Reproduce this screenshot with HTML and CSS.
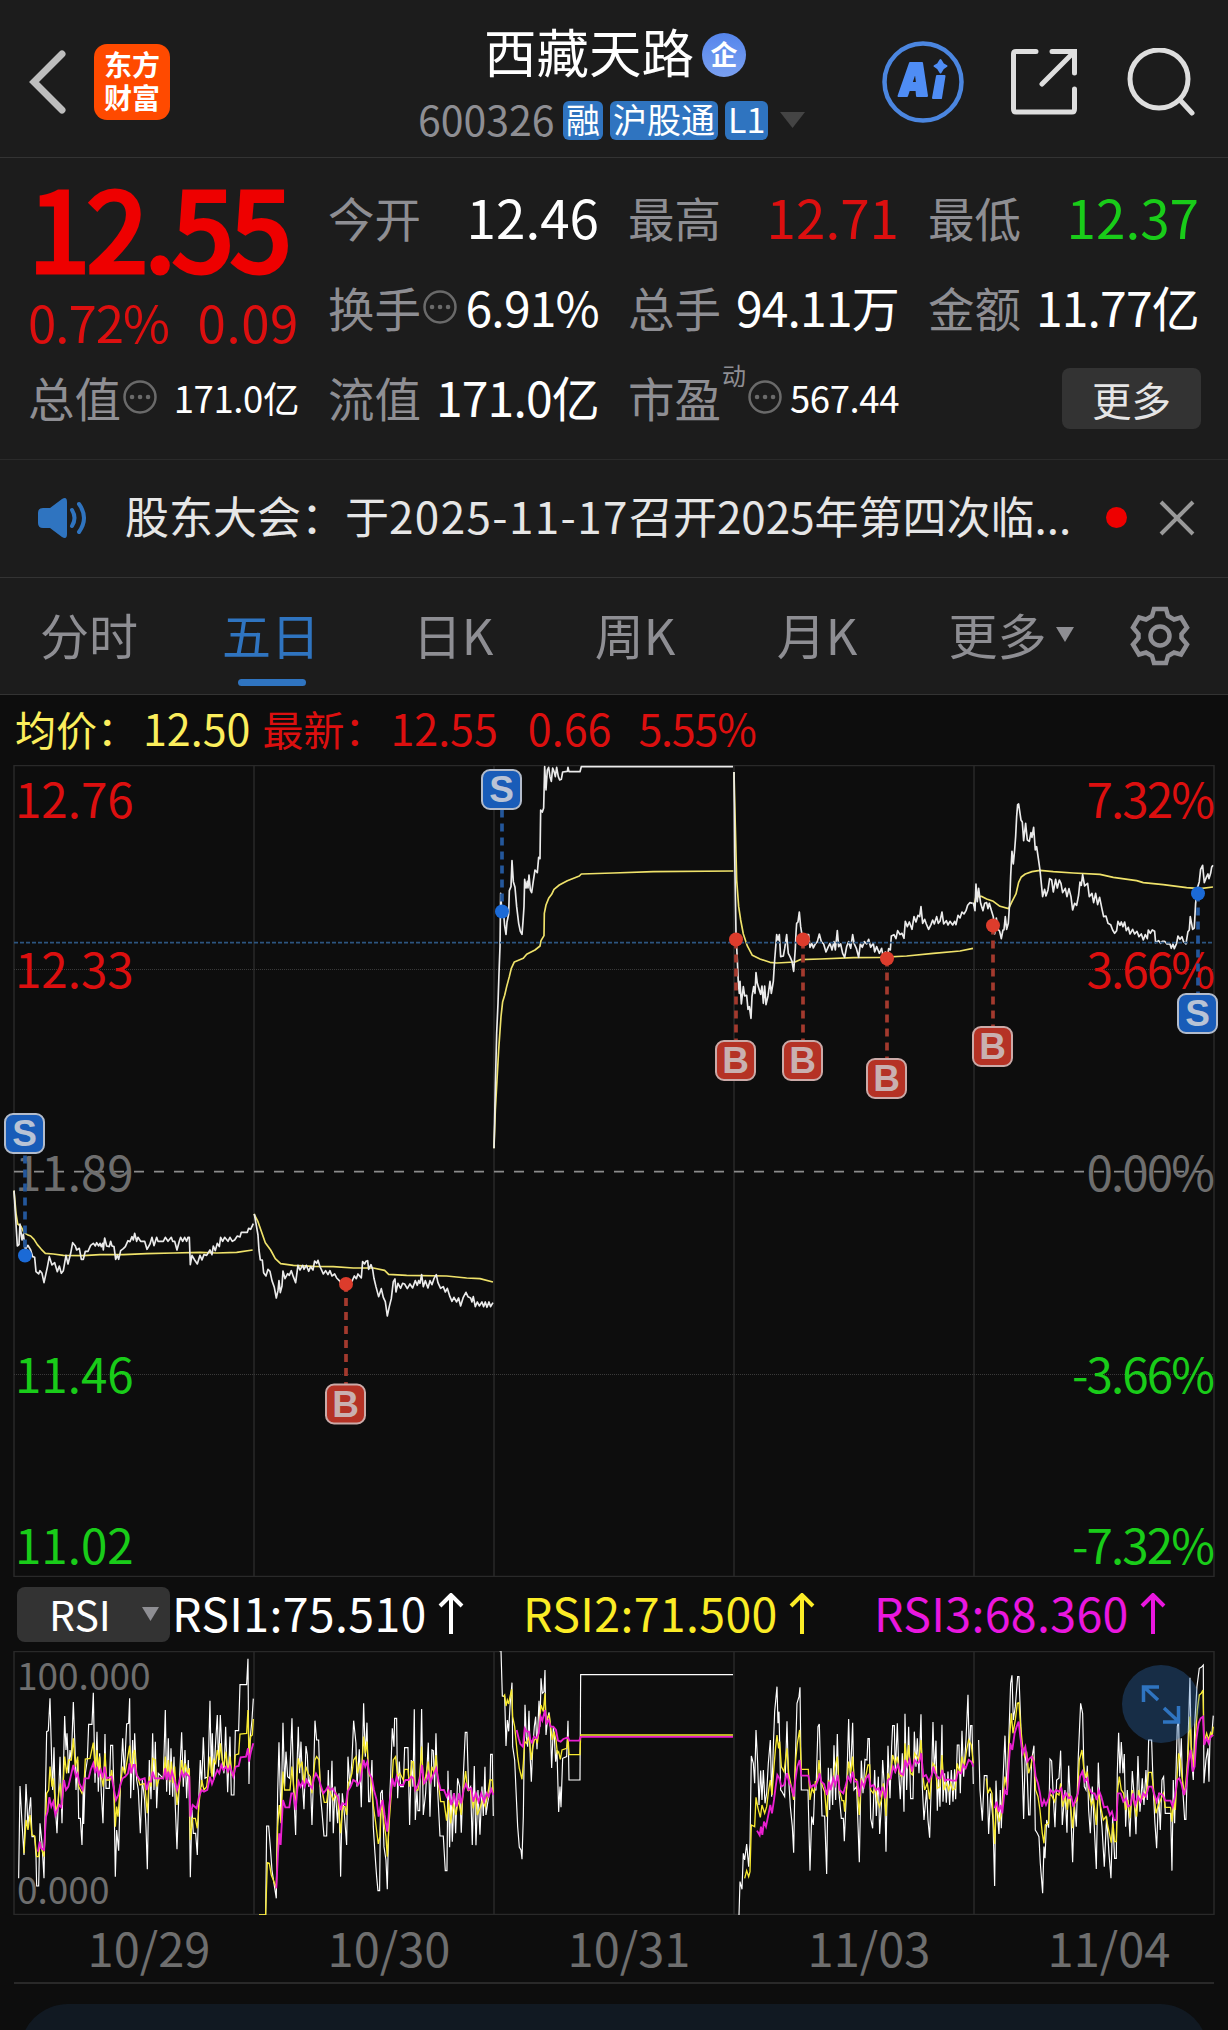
FILE: index.html
```html
<!DOCTYPE html>
<html lang="zh-CN">
<head>
    <meta charset="UTF-8">
    <meta name="viewport" content="width=device-width, initial-scale=1.0">
    <title>西藏天路 600326</title>

    <link rel="stylesheet" href="styles.css">
</head>
<body>
    <header class="topbar">
        <div class="topbar-left">
            <svg class="back" width="38" height="64" viewBox="0 0 38 64"><path d="M34 4L6 32L34 60"/></svg>
            <div class="logo"><span>东方</span><span>财富</span></div>
        </div>
        <div class="stock">
            <div class="stock-name">西藏天路<span class="qi">企</span></div>
            <div class="stock-code">
                <span class="code">600326</span>
                <span class="tag">融</span>
                <span class="tag">沪股通</span>
                <span class="tag">L1</span>
                <svg class="down" width="26" height="16" viewBox="0 0 26 16"><path d="M0 0H25L12.5 16Z"/></svg>
            </div>
        </div>
        <div class="topbar-right">
            <svg width="82" height="82" viewBox="0 0 82 82">
                <circle cx="41" cy="41" r="38.5" fill="none" stroke="#4b86e0" stroke-width="4.5"/>
                <path fill="#4f8df5" fill-rule="evenodd" stroke="#4f8df5" stroke-width="2" stroke-linejoin="round" d="M28 22H40L45 55H35L34.500 49H27L25 55H16.500ZM33.500 30L29.500 42H35ZM55 35H62.500L59 57H51ZM58.500 19L61 23L64.500 25L61 27.500L58.500 31.500L56 27.500L52.500 25L56 23Z"/>
            </svg>
            <svg class="line-icon" width="68" height="68" viewBox="0 0 68 68">
                <path d="M26 3.500H6Q3.500 3.500 3.500 6V61Q3.500 64 6 64H62Q64.500 64 64.500 61V41M42 3.500H64.500V25M62 6L32 36"/>
            </svg>
            <svg class="line-icon search" width="68" height="68" viewBox="0 0 68 68">
                <circle cx="32" cy="31" r="29"/><path d="M53 52L65 65"/>
            </svg>
        </div>
    </header>

    <section class="quote">
        <div class="price">
            <div class="price-now">12.55</div>
            <div class="price-change"><span>0.72%</span><span class="diff">0.09</span></div>
        </div>
        <div class="cell"><label>今开</label><b class="big">12.46</b></div>
        <div class="cell"><label>最高</label><b class="big red">12.71</b></div>
        <div class="cell"><label>最低</label><b class="big green">12.37</b></div>
        <div class="cell"><label>换手</label><svg class="dots" viewBox="0 0 34 34"><circle cx="17" cy="17" r="15.500"/><path d="M9 17h.1M17 17h.1M25 17h.1"/></svg><b>6.91%</b></div>
        <div class="cell"><label>总手</label><b>94.11万</b></div>
        <div class="cell"><label>金额</label><b>11.77亿</b></div>
        <div class="cell"><label>总值</label><svg class="dots" viewBox="0 0 34 34"><circle cx="17" cy="17" r="15.500"/><path d="M9 17h.1M17 17h.1M25 17h.1"/></svg><b class="small">171.0亿</b></div>
        <div class="cell"><label>流值</label><b>171.0亿</b></div>
        <div class="cell"><label>市盈</label><sup>动</sup><svg class="dots" viewBox="0 0 34 34"><circle cx="17" cy="17" r="15.500"/><path d="M9 17h.1M17 17h.1M25 17h.1"/></svg><b class="small">567.44</b></div>
        <div class="cell cell-more"><button class="more-btn">更多</button></div>
    </section>

    <section class="notice">
        <svg width="52" height="50" viewBox="0 0 52 50">
            <path fill="#2f74c0" d="M6 15H13L25 6Q30 3 30 9V41Q30 47 25 44L13 35H6Q1 35 1 30V20Q1 15 6 15Z"/>
            <path fill="none" stroke="#2f74c0" stroke-width="4" stroke-linecap="round" d="M35 17Q40 25 35 33M42 11Q52 25 42 39"/>
        </svg>
        <div class="notice-text">股东大会：于<span class="date">2025-11-17</span>召开2025年第四次临...</div>
        <span class="red-dot"></span>
        <svg class="close" width="36" height="36" viewBox="0 0 36 36"><path d="M2 2L34 34M34 2L2 34"/></svg>
    </section>

    <nav class="tabs">
        <a class="tab">分时</a>
        <a class="tab active">五日</a>
        <a class="tab">日K</a>
        <a class="tab">周K</a>
        <a class="tab">月K</a>
        <a class="tab tab-more">更多<svg width="18" height="15" viewBox="0 0 18 15"><path fill="#8e8e93" d="M0 0H18L9 15Z"/></svg></a>
        <svg class="gear" width="62" height="64" viewBox="-31 -32 62 64">
            <path d="M-6-27H6L8-20L14-16.500L21-18.500L27-8.500L21.500-2V2L27 8.500L21 18.500L14 16.500L8 20L6 27H-6L-8 20L-14 16.500L-21 18.500L-27 8.500L-21.500 2V-2L-27-8.500L-21-18.500L-14-16.500L-8-20Z"/>
            <circle r="9.500"/>
        </svg>
    </nav>

    <main class="chart">
        <div class="legend">
            <span class="yellow">均价：<i>12.50</i></span>
            <span class="latest">最新：<i>12.55</i></span>
            <span class="latest"><i>0.66</i></span>
            <span class="latest percent"><i>5.55%</i></span>
        </div>

        <svg class="price-chart" width="1228" height="812" viewBox="0 765 1228 812">
            <path class="grid" d="M14 765.500H1214M14 1576.500H1214M14 765V1577M254 765V1577M494 765V1577M734 765V1577M974 765V1577M1214 765V1577"/>
            <path class="grid-dot" d="M14 969.500H1214M14 1374.500H1214"/>
            <path class="zero" d="M14 1171.700H1214"/>

            <!-- average price, one path per day -->
            <g class="avg">
                <path transform="translate(0 1100) scale(.3333)" d="M42 272L48 340L53 372L62 378L72 398L82 404L92 408L102 418L112 434L124 448L136 460L160 462L190 466L250 467L300 464L370 464L440 461L520 459L600 457L650 459L710 457L758 450"/>
                <path transform="translate(0 1100) scale(.3333)" d="M762 342L774 365L784 394L796 428L812 450L826 476L842 491L880 496L940 499L1000 500L1060 504L1120 504L1154 511L1166 523L1220 526L1340 528L1400 534L1440 536L1479 546"/>
                <path transform="translate(480 760) scale(.3333)" d="M42 1165L46 1050L51 960L56 870L63 770L68 725L74 706L80 680L88 650L94 625L103 606L130 595L140 583L165 570L180 558L183 542L192 527L193 460L198 435L206 415L215 403L222 388L238 375L262 362L298 348L304 342L400 339L520 335L760 333"/>
                <path transform="translate(720 760) scale(.3333)" d="M42 36L46 200L50 360L56 440L62 480L70 522L82 558L97 586L120 597L150 607L170 609L225 606L240 599L300 597L400 593L480 592L560 588L640 580L720 573L759 565"/>
                <path transform="translate(720 760) scale(.3333)" d="M762 438L768 410L784 409L800 417L820 424L840 439L866 446L876 425L888 402L896 367L904 351L916 342L936 335L960 331L1000 335L1060 339L1140 343L1180 352L1250 362L1270 368L1330 374L1400 383L1440 386L1479 381"/>
            </g>

            <g class="now">
                <path transform="translate(0 1100) scale(.3333)" d="M42 272L46 340L52 438L57 434L60 372L66 420L70 402L76 448L84 436L92 450L98 470L104 472L108 515L116 522L120 512L126 520L132 548L138 520L142 502L148 470L156 495L164 488L172 515L178 498L184 520L190 512L198 466L204 492L212 460L218 428L226 438L230 450L238 445L244 478L250 478L256 454L264 454L272 436L280 430L286 438L290 428L296 438L300 430L304 440L308 430L310 450L314 414L320 438L328 440L332 424L336 438L342 440L347 478L352 466L356 478L362 452L370 446L376 440L384 422L390 425L396 410L400 420L404 400L410 424L414 412L422 424L434 424L441 448L450 432L456 412L462 437L470 412L474 424L490 424L496 412L504 424L514 412L518 424L524 424L531 450L538 424L542 412L548 424L554 412L560 424L564 412L568 412L571 494L576 466L584 480L592 492L600 466L606 480L612 464L620 466L630 450L636 464L640 438L646 452L652 430L658 440L662 412L668 424L674 412L684 424L690 412L697 424L704 420L712 408L720 411L724 397L742 397L746 385L752 388L760 371"/>
                <path transform="translate(0 1100) scale(.3333)" d="M763 342L768 370L774 405L777 450L781 480L787 480L791 518L798 528L804 508L810 514L816 542L823 562L829 594L834 572L837 542L841 578L846 558L849 513L855 536L863 521L868 526L874 512L880 530L887 548L894 496L900 510L908 496L912 508L919 496L926 514L932 500L939 510L944 483L950 490L954 481L960 500L964 508L970 522L977 512L984 524L990 512L996 528L1004 522L1010 534L1018 542L1026 556L1036 564L1044 552L1050 540L1056 544L1063 528L1069 536L1074 522L1084 534L1088 485L1094 492L1098 484L1103 482L1106 508L1113 494L1118 508L1122 535L1128 560L1136 590L1144 566L1150 592L1156 605L1162 648L1168 620L1174 596L1180 545L1185 537L1188 576L1194 550L1202 565L1208 550L1214 552L1222 566L1230 552L1238 564L1246 542L1252 556L1256 542L1260 550L1265 524L1270 560L1276 542L1284 564L1290 542L1296 554L1302 536L1309 524L1314 548L1322 565L1330 560L1336 576L1342 565L1350 590L1356 604L1362 592L1370 606L1376 594L1382 618L1390 592L1398 577L1404 590L1412 594L1416 606L1420 590L1426 620L1432 606L1438 618L1446 606L1451 620L1456 606L1461 622L1467 606L1472 620L1479 608"/>
                <path transform="translate(480 760) scale(.3333)" d="M42 1165L46 980L50 820L54 730L57 640L60 560L62 400L66 460L70 450L74 498L78 523L81 486L86 462L88 392L93 380L96 302L100 365L105 382L110 440L116 490L121 514L126 523L129 485L132 440L134 358L138 384L142 364L144 384L147 345L151 390L155 398L160 363L165 330L172 338L176 292L180 296L182 150L187 156L191 144L194 20L198 90L202 30L206 22L210 50L214 64L218 24L222 34L226 50L230 22L235 50L239 60L244 58L248 36L262 34L264 22L267 35L300 35L304 20H759"/>
                <path transform="translate(720 760) scale(.3333)" d="M42 36L44 280L48 520L52 600L55 670L58 700L60 664L64 732L70 680L74 708L80 706L84 748L88 740L93 775L96 710L101 680L105 700L108 638L112 670L118 690L122 703L126 678L130 730L134 678L138 734L144 708L150 664L154 700L160 664L164 600L170 524L174 540L178 524L182 590L190 588L194 566L200 524L205 580L210 590L216 604L221 634L226 566L228 520L230 490L234 486L238 456L242 500L246 524L252 545L260 524L266 524L270 562L276 550L280 564L286 552L292 545L298 522L304 545L311 552L318 576L324 562L330 550L336 570L342 545L346 570L352 512L356 560L362 552L368 580L374 592L380 560L386 545L392 565L398 524L403 552L409 565L416 592L421 552L427 562L433 545L440 552L446 538L452 562L460 550L464 576L470 560L478 580L485 565L490 594L496 576L502 594L506 566L511 570L514 528L522 524L528 536L533 512L540 524L546 520L552 535L556 484L562 500L568 486L576 508L582 470L588 486L594 466L599 470L603 440L608 490L614 478L619 492L626 508L633 494L638 480L643 492L650 470L655 490L660 484L666 456L671 492L679 482L684 495L690 484L698 495L704 484L708 494L714 466L720 474L726 456L732 462L738 452L743 436L750 428L758 430"/>
                <path transform="translate(720 760) scale(.3333)" d="M760 428L765 452L768 372L772 425L776 385L782 430L789 452L794 430L800 428L804 446L808 430L815 454L820 470L824 522L829 474L834 508L839 514L844 536L849 510L852 510L856 470L860 508L865 490L869 430L872 350L876 274L880 312L884 270L887 230L890 170L893 134L896 132L903 180L907 186L911 242L917 190L922 240L928 244L933 218L936 232L941 202L946 270L950 260L954 288L960 330L964 370L968 410L974 388L978 408L984 390L989 356L995 360L1000 396L1007 358L1012 384L1018 360L1023 370L1028 398L1036 385L1041 410L1047 386L1053 410L1058 450L1064 430L1070 436L1076 405L1080 366L1084 376L1088 344L1094 378L1103 370L1108 410L1116 400L1121 428L1127 400L1133 434L1139 412L1145 442L1151 470L1158 468L1164 490L1172 494L1178 510L1184 520L1190 512L1194 484L1200 496L1204 486L1209 500L1214 486L1219 512L1225 502L1230 522L1238 508L1244 522L1251 514L1257 530L1264 522L1270 540L1276 524L1282 536L1285 510L1291 520L1297 510L1304 514L1307 548L1316 542L1322 550L1327 544L1334 544L1341 552L1350 552L1354 565L1359 552L1363 566L1370 550L1374 528L1380 538L1386 530L1391 545L1398 552L1404 515L1408 510L1411 470L1418 508L1423 504L1427 430L1433 382L1438 365L1442 328L1448 316L1453 368L1460 350L1464 342L1467 356L1472 340L1475 322L1479 316"/>
            </g>
            <path class="blue-line" d="M14 942.700H1214"/>

            <g class="axis">
                <text class="red" x="15" y="818">12.76</text>
                <text class="red" x="15" y="988">12.33</text>
                <text class="gray" x="15" y="1191">11.89</text>
                <text class="green" x="15" y="1393">11.46</text>
                <text class="green" x="15" y="1564">11.02</text>
            </g>
            <g class="axis axis-right">
                <text class="red" x="1213" y="818">7.32%</text>
                <text class="red" x="1213" y="988">3.66%</text>
                <text class="gray" x="1213" y="1191">0.00%</text>
                <text class="green" x="1213" y="1393">-3.66%</text>
                <text class="green" x="1213" y="1564">-7.32%</text>
            </g>

            <!-- buy / sell marks -->
            <g class="mark sell" transform="translate(24.500 1133.500)"><path d="M0.500 22V120"/><circle cx=".5" cy="122" r="7"/><rect x="-19.500" y="-19.500" width="39" height="39" rx="8"/><text y="12.500">S</text></g>
            <g class="mark buy" transform="translate(345.500 1404)"><path d="M.5 -120V-20"/><circle cx=".5" cy="-120" r="7"/><rect x="-19.500" y="-19.500" width="39" height="39" rx="8"/><text y="12.500">B</text></g>
            <g class="mark sell" transform="translate(501.500 789.500)"><path d="M.5 20V120"/><circle cx=".5" cy="122" r="7"/><rect x="-19.500" y="-19.500" width="39" height="39" rx="8"/><text y="12.500">S</text></g>
            <g class="mark buy" transform="translate(735.500 1060.500)"><path d="M.5 -120V-20"/><circle cx=".5" cy="-121" r="7"/><rect x="-19.500" y="-19.500" width="39" height="39" rx="8"/><text y="12.500">B</text></g>
            <g class="mark buy" transform="translate(802.500 1060.500)"><path d="M.5 -120V-20"/><circle cx=".5" cy="-121" r="7"/><rect x="-19.500" y="-19.500" width="39" height="39" rx="8"/><text y="12.500">B</text></g>
            <g class="mark buy" transform="translate(886.500 1078.500)"><path d="M.5 -120V-20"/><circle cx=".5" cy="-120" r="7"/><rect x="-19.500" y="-19.500" width="39" height="39" rx="8"/><text y="12.500">B</text></g>
            <g class="mark buy" transform="translate(992.500 1046.500)"><path d="M.5 -120V-20"/><circle cx=".5" cy="-121" r="7"/><rect x="-19.500" y="-19.500" width="39" height="39" rx="8"/><text y="12.500">B</text></g>
            <g class="mark sell" transform="translate(1197.500 1013.500)"><path d="M.5 -120V-20"/><circle cx=".5" cy="-120" r="7"/><rect x="-19.500" y="-19.500" width="39" height="39" rx="8"/><text y="12.500">S</text></g>
        </svg>

        <div class="rsi-bar">
            <button class="rsi-select">RSI<svg width="17" height="14" viewBox="0 0 17 14"><path fill="#8e8e93" d="M0 0H17L8.500 14Z"/></svg></button>
            <span class="rsi1">RSI1:75.510<svg class="up" viewBox="0 0 26 42"><path d="M13 41V3M2 13L13 2L24 13"/></svg></span>
            <span class="rsi2">RSI2:71.500<svg class="up" viewBox="0 0 26 42"><path d="M13 41V3M2 13L13 2L24 13"/></svg></span>
            <span class="rsi3">RSI3:68.360<svg class="up" viewBox="0 0 26 42"><path d="M13 41V3M2 13L13 2L24 13"/></svg></span>
        </div>

        <svg class="rsi-chart" width="1228" height="264" viewBox="0 1651 1228 264">
            <path class="grid" d="M14 1651.500H1214M14 1914.500H1214M14 1651V1915M254 1651V1915M494 1651V1915M734 1651V1915M974 1651V1915M1214 1651V1915"/>
            <g class="axis axis-rsi">
                <text class="gray" x="17" y="1690">100.000</text>
                <text class="gray" x="17" y="1904">0.000</text>
            </g>

            <g class="line1">
                <path transform="translate(0 1560) scale(.3333)" d="M56 955L60 678L66 790L72 885L78 672L84 800L88 750L92 712L96 830L104 830L108 890L110 978L116 978L120 790L126 850L132 955L136 720L140 515L145 512L150 415L155 600L158 690L162 562L166 740L171 820L176 700L180 590L186 790L190 640L194 468L198 570L201 520L206 640L210 570L214 600L220 426L225 560L228 690L233 600L236 775L241 775L246 855L250 680L251 792L256 640L262 600L266 493L276 493L280 398L285 668L291 515L295 695L299 580L304 700L309 790L315 522L318 685L328 685L332 556L338 556L342 700L346 950L350 810L356 872L361 680L368 535L373 640L380 492L386 490L389 415L392 715L398 540L401 690L404 520L410 660L415 690L421 820L427 660L434 720L438 800L442 928L448 600L453 718L458 520L462 690L466 545L470 745L475 640L490 655L496 450L500 695L505 535L509 705L513 565L518 710L522 590L526 740L531 868L537 690L545 517L550 680L555 570L560 715L565 600L568 720L571 952L576 750L580 820L587 820L592 885L597 700L601 600L605 680L610 532L615 655L624 650L630 422L634 640L637 520L641 660L647 545L652 465L656 620L661 465L667 600L672 640L677 500L683 697L690 530L694 705L702 705L706 512L716 512L720 374L740 374L744 296L747 672L750 540L756 480L760 416"/>
                <path transform="translate(0 1560) scale(.3333)" d="M777 1065H797L800 798H806L811 860L816 930L822 970L829 1015L833 700L837 547L843 780L849 488L854 680L858 575L863 650L869 655L876 475L881 690L887 825L891 620L895 500L899 640L903 545L908 680L912 748L918 558L922 585L926 680L931 650L936 795L941 640L945 482L950 540L956 540L961 700L966 755L972 828L980 828L985 630L990 785L996 602L1000 820L1005 680L1013 790L1017 700L1022 950L1027 700L1033 760L1040 855L1044 590L1050 680L1056 600L1061 482L1068 550L1071 680L1078 568L1084 742L1091 430L1096 590L1101 488L1106 725L1110 725L1116 600L1120 800L1125 880L1130 950L1134 992L1139 992L1142 700L1147 690L1152 860L1158 900L1162 988L1167 760L1172 650L1177 505L1182 560L1184 475H1190L1193 715L1198 605L1202 680H1210L1214 563L1224 563L1229 795L1234 600L1239 680L1243 448L1246 780L1251 690L1254 752H1259L1265 447L1270 765L1277 700L1285 548L1290 770L1296 570L1300 572L1304 680L1308 520L1313 690L1320 828L1330 828L1336 932H1341L1344 632L1349 862L1353 690L1357 845L1363 700L1367 820L1373 655L1379 680L1384 818L1390 650L1396 517H1401L1406 690L1412 680L1417 855L1423 618L1428 856L1434 690L1440 824L1446 680L1450 768L1455 620L1458 765L1463 730L1470 690L1472 583H1477L1480 768"/>
                <path transform="translate(480 1560) scale(.3333)" d="M57 272H63L67 408L74 410L78 558L82 480L86 514L90 440L96 368L98 560L104 600L108 690L113 800L118 862L123 870L126 898L130 770L132 620L135 434L139 530L143 560L147 452L151 600L154 665L158 570L163 500L167 470L171 568L177 422L180 500L183 355L187 400L192 395L195 330L198 525L203 475L207 457L211 500L215 624L220 500L223 530L227 605L231 570L236 756L240 680L243 742L248 595L260 590L264 482L267 660H300L302 344H759"/>
                <path transform="translate(728 1560) scale(.3333)" d="M33 1065L36 965L42 988L46 880L50 900L56 852L62 920L66 850L70 588L76 610L80 670L84 510L89 610L93 735L98 632L102 720L106 630L111 730L116 700L121 610L127 540L131 710L136 560L140 455L147 380L150 490L153 455L158 690L162 695L170 710L177 484L181 640L187 740L193 800L197 878L202 600L207 430L213 410L216 382L220 690H240L246 932L251 770L256 795L260 690L264 690L270 500L274 492L278 640L282 768L290 768L296 942L301 623L305 750L309 625L314 735L318 556L323 720L328 522L333 700L340 775L346 775L349 844L356 680L362 477L367 660L374 488L378 690L386 680L394 907L400 602L405 700L411 598L417 600L420 536H424L428 775L434 805L440 630L445 768L451 650L455 822L460 740L464 600L470 690L474 875L480 557L486 715L491 560L494 497H499L502 640L508 490L513 650L517 718L523 580L528 755L531 461L536 690L542 500L548 716L555 716L559 515L564 620L568 535L573 640L579 463L583 680L588 780L596 690L600 780L605 833L611 640L615 486L619 640L624 542L628 752L632 650L636 740L642 494L645 725L650 640L655 728L660 635L665 735L670 630L675 725L680 628L683 718L688 555H693L697 700L702 512L707 650L714 540L720 404L724 590L728 497H732L736 672"/>
                <path transform="translate(728 1560) scale(.3333)" d="M752 540L756 690L763 782L769 647H777L782 822L788 700L795 780L800 978L804 662L808 760L813 822L817 690L820 805L826 640L831 527L836 690L842 550L848 370L852 346L856 480L862 440L869 350H873L878 480L883 640L887 777L892 570L897 620L902 765H906L911 600L918 557L922 810L928 820L933 830L937 910L944 1000L948 860L951 895L956 780L962 803L966 597L971 603L976 710L981 802L986 660L993 655L998 572L1003 795L1011 690L1017 818L1022 617L1028 740L1034 907L1039 730L1045 800L1051 590L1058 430L1064 460L1069 680L1074 690L1078 617L1082 750L1087 820L1093 680L1099 800L1105 927L1111 608L1116 730L1122 800L1129 920L1136 770L1143 880L1149 955L1154 770L1160 895L1165 895L1168 640L1172 518L1176 640L1180 546L1185 640L1189 582L1193 800L1198 690L1206 830L1213 633L1218 700L1224 823L1230 588L1236 755L1243 655L1248 735L1254 630L1258 720L1262 540H1271L1276 690L1281 790L1286 865L1292 700L1297 810L1302 660L1307 650L1312 760H1328L1332 932L1336 660L1340 790L1344 640L1348 500L1352 480L1355 650L1360 535L1364 680L1370 778H1374L1379 590L1386 353L1390 590L1396 660L1401 480L1407 380L1414 325L1420 322L1426 315L1428 670L1434 600L1440 565L1443 665L1446 540L1452 520L1456 467"/>
            </g>
            <g class="line2">
                <path transform="translate(0 1560) scale(.3333)" d="M72 880L78 780L84 810L90 765L96 825L104 828L110 890H116L120 845L126 870L132 890L140 700L146 690L150 620L156 680L160 655L166 730L171 760L176 700L181 670L186 735L194 590L200 640L206 600L214 600L220 535L226 620L233 590L236 680L246 700L252 680L256 597L270 595L280 548L286 630L291 570L295 640L299 590L304 650L310 680L315 580L320 660H330L335 630L342 690L346 800L350 740L354 770L361 680L368 620L375 640L382 600L389 557L394 640L400 580L404 570L410 640L420 675L434 670L442 760L448 650L453 680L458 595L466 600L470 680L478 655H490L496 590L500 660L505 600L510 665L514 605L519 670L524 620L531 735L538 680L545 600L550 640L556 610L562 640L568 625L571 840L578 775H586L592 805L597 730L605 660L612 690L620 680L630 590L636 650L641 600L647 610L652 570L658 600L661 550L667 600L672 620L678 575L684 640L690 590L696 645L702 645L706 585L716 582L720 522L740 520L744 450L747 590L752 530L757 525L760 477"/>
                <path transform="translate(0 1560) scale(.3333)" d="M777 1065H797L802 908L808 910L814 945L820 960L829 985L833 800L838 735L843 790L849 635L854 690L862 690L870 690L876 620L881 680L887 740L891 650L895 595L900 620L906 605L912 670L918 620L924 640L931 650L936 700L941 640L945 600L950 590L957 600L961 680L968 700L973 727H980L986 680L992 700L1000 720L1008 700L1014 720L1022 820L1028 740L1035 740L1040 765L1045 670L1050 660L1056 640L1061 600L1068 590L1073 640L1080 610L1084 650L1091 530L1096 580L1101 545L1106 640L1113 655L1118 720L1126 780L1135 852L1140 830L1145 720L1152 790L1158 830L1162 890L1168 780L1174 700L1180 600L1187 590L1193 650L1200 640L1210 660L1214 628H1224L1229 680L1236 605H1240L1246 690L1254 690L1260 640L1265 560L1270 675L1277 650L1285 605L1290 670L1296 620L1303 640L1308 585L1314 660L1322 725H1332L1340 782L1346 720L1352 790L1360 730L1368 765L1375 720L1384 765L1390 690L1397 633L1403 690H1412L1420 745L1426 700L1432 765L1440 745L1448 720L1456 740L1464 700L1470 660H1477L1480 700"/>
                <path transform="translate(480 1560) scale(.3333)" d="M70 410L74 405L78 438L82 420L86 432L90 410L95 388L98 470L104 500L108 540L113 590L118 625L126 658L130 610L134 545L140 550L147 530L151 570L154 600L158 560L163 540L168 535L172 550L177 510L183 435L190 455L195 400L198 490L204 470L208 465L212 500L217 540L222 515L228 540L232 580L236 575L241 598L246 570L260 565L264 530L267 584H300L302 525H759"/>
                <path transform="translate(728 1560) scale(.3333)" d="M50 955L56 932L62 950L66 935L70 795L80 800L84 712L90 745L97 772L102 735L110 760L116 740L122 690L127 660L132 705L138 620L143 560L147 525L152 565L155 545L160 620L168 635L177 565L182 640L190 680L197 720L203 600L208 550L215 510L220 628H241L246 720L252 685L258 700L262 665H268L273 600L278 660L284 680L290 695L296 770L302 660L308 690L314 670L320 625L328 590L334 690L342 722H347L350 755L356 680L362 605L368 640L374 590L378 655L386 660L394 765L400 655L406 680L412 655L420 615H425L428 690L436 700L442 680L448 720L455 740L460 720L466 670L474 768L480 640L487 660L494 585L502 610L508 590L514 640L520 650L527 640L531 550L537 610L542 555L548 640L554 645L560 580L567 590L573 600L579 540L584 640L590 690L598 670L605 718L611 650L615 610L622 620L628 685L636 680L642 585L648 690L656 670L662 690L668 670L674 690L682 685L688 610L696 640L702 590L708 625L716 570L722 540L730 555L736 610"/>
                <path transform="translate(728 1560) scale(.3333)" d="M775 655L780 700L786 685L792 700L796 780L800 852L805 740L810 760L814 785L820 765L826 700L831 650L838 690L843 560L850 460L855 520L862 480L868 430L873 428L878 500L884 560L890 590L896 575L902 640L908 620L914 590L918 600L923 690L930 710L936 750L943 820L948 850L952 795L962 790L966 700L973 710L980 725L986 700L993 705L998 670L1004 740L1012 710L1018 750L1023 700L1030 760L1034 805L1040 730L1048 720L1054 600L1062 570L1067 620L1073 650L1078 635L1082 690L1090 735L1097 720L1105 795L1111 690L1118 740L1126 780L1134 770L1142 810L1150 848L1155 790L1160 845H1165L1169 690L1174 650L1180 690L1187 700L1193 750L1200 720L1206 775L1213 690L1220 740L1226 770L1232 690L1240 720L1248 710L1256 690L1262 637H1271L1276 680L1284 760L1290 740L1298 720L1306 700L1312 742H1328L1332 785L1337 720L1342 750L1348 640L1352 580L1357 600L1362 650L1370 705L1376 640L1380 590L1386 470L1390 560L1397 620L1402 540L1408 450L1414 405L1420 400L1425 390L1428 550L1436 520L1442 540L1448 518L1453 525L1456 500"/>
            </g>
            <g class="line3">
                <path transform="translate(0 1560) scale(.3333)" d="M114 875L119 845L124 865L132 870L138 770L143 755L148 712L154 740L160 725L166 765L172 750L178 735L184 742L192 660L198 690L205 680L212 650L220 615L228 650L233 640L238 670L248 690L254 655L266 655L272 630L280 610L286 640L291 620L296 645L302 630L308 655L314 620L320 655L335 650L342 690L348 720L355 705L361 675L368 655L376 650L384 640L389 610L394 640L400 615L405 615L410 645L420 660L434 655L440 690L446 665L453 665L458 635L464 655L478 655H490L496 625L500 660L505 635L510 660L516 635L522 655L531 690L538 665L545 635L552 650L558 640L568 650L571 770L578 735L590 745L597 710L605 690L612 695L622 690L630 650L636 672L644 650L652 630L658 640L664 615L670 630L678 620L684 635L690 620L700 650L707 620L716 618L722 592L738 590L744 565L747 605L753 575L760 550"/>
                <path transform="translate(0 1560) scale(.3333)" d="M829 985L834 880L838 820L842 855L849 720L856 742H868L874 700L880 700L887 750L892 690L896 665L902 680L908 665L914 680L920 660L928 675L936 685L942 655L948 640L956 655L962 675L970 700L978 690L984 680L990 690L998 685L1006 700L1014 710L1022 750L1028 730L1038 735L1043 695L1052 680L1060 660L1068 665L1074 675L1082 660L1091 600L1096 620L1102 605L1108 640L1116 655L1122 690L1130 720L1136 770L1142 740L1148 720L1154 765L1162 815L1170 720L1177 655L1184 680L1190 650L1198 675L1210 675L1216 660L1226 660L1234 650L1240 655L1246 690L1254 675L1260 655L1266 615L1272 670L1280 660L1286 640L1292 665L1300 645L1309 625L1316 665L1322 690H1332L1340 710L1346 695L1354 735L1362 700L1370 740L1377 700L1384 730L1391 690L1398 672L1405 690L1414 685L1420 725L1428 700L1436 725L1444 700L1452 725L1460 700L1466 710L1474 688L1480 705"/>
                <path transform="translate(480 1560) scale(.3333)" d="M110 510L116 535L121 552L129 560L134 505L140 515L147 515L151 540L156 548L162 530L170 535L176 520L182 470L187 482L195 450L199 490L206 480L212 500L220 500L228 510L234 542L242 545L250 537L264 532L268 542H298L302 530.500H759"/>
                <path transform="translate(728 1560) scale(.3333)" d="M87 812L95 826L99 800L103 825L108 785L114 800L120 770L127 735L132 760L138 720L143 680L148 645L154 655L160 680L168 675L177 640L184 670L190 680L197 710L202 660L208 620L215 600L220 647H241L248 682L256 675L262 680L270 660L275 640L280 665L288 672L297 705L303 665L308 690L316 655L322 675L329 645L335 690L346 700L352 680L360 650L368 665L374 635L380 665L388 665L394 710L401 665L408 680L414 655L422 645L428 680L436 675L444 690L452 685L457 705L464 680L472 715L480 660L488 655L495 620L502 635L510 615L518 640L526 645L532 600L538 620L545 600L552 635L560 600L568 610L574 605L580 580L586 650L594 645L603 665L611 645L616 620L622 640L630 655L637 655L643 630L650 662L660 658L672 662L684 662L690 635L700 640L706 615L713 625L722 600L730 605L736 620"/>
                <path transform="translate(728 1560) scale(.3333)" d="M800 745L806 725L812 755L818 735L823 760L830 690L837 705L842 620L847 550L853 570L860 520L866 500L872 485L877 530L884 580L892 560L898 605L905 595L912 590L918 605L923 650L930 670L936 700L942 740L948 720L954 735L962 715L968 690L976 700L984 690L993 695L1000 685L1006 715L1014 700L1022 715L1030 710L1036 740L1042 720L1050 700L1056 650L1063 635L1070 665L1078 655L1084 685L1092 700L1100 700L1106 720L1112 690L1120 710L1128 742L1138 740L1146 765L1152 755L1158 780L1165 780L1170 700L1178 700L1186 725L1194 715L1200 740L1208 735L1215 700L1222 735L1230 710L1238 725L1246 700L1254 710L1262 680L1272 680L1278 700L1286 725L1294 700L1304 705L1312 722H1328L1334 740L1341 710L1348 660L1354 655L1360 670L1368 705L1375 680L1382 605L1388 570L1394 635L1400 620L1405 540L1412 490L1418 475L1425 470L1429 555L1436 535L1442 550L1448 530L1456 525"/>
            </g>

            <circle cx="1161" cy="1704" r="39" fill="#2f74c0" fill-opacity=".32"/>
            <path fill="none" stroke="#2f74c0" stroke-width="3.500" d="M1158 1700L1144 1687M1143.500 1702V1687H1159M1164 1708L1179 1722M1178.500 1706V1722H1163"/>
        </svg>

        <div class="dates">
            <span>10/29</span><span>10/30</span><span>10/31</span><span>11/03</span><span>11/04</span>
        </div>
        <div class="bottom"><div class="bottom-panel"></div></div>
    </main>
</body>
</html>
```

FILE: styles.css
```css
*{
    box-sizing: border-box;
}

body{
    margin: 0;
    width: 1228px;
    height: 2030px;
    overflow: hidden;
    background-color: #0d0d0d;
    color: #fff;
    font-family: "Noto Sans CJK SC", "Noto Sans", sans-serif;
}

svg{
    display: block;
    flex: none;
}

button{
    border: none;
    padding: 0;
    font-family: inherit;
    color: #e6e6e6;
    background-color: #333;
    border-radius: 8px;
}

i, b{
    font-style: normal;
    font-weight: normal;
}

.red{ color: #dc0f0f; fill: #dc0f0f; }
.green{ color: #19cc19; fill: #19cc19; }
.gray{ fill: #6e6e6e; }
.yellow{ color: #fbee5c; }

/* top bar */
.topbar{
    display: grid;
    grid-template-columns: 400px 420px 1fr;
    height: 158px;
    background-color: #1c1c1c;
    border-bottom: 1px solid #333;
}

.topbar-left{
    display: flex;
    align-items: center;
    padding: 6px 0 0 28px;
}

.back path{
    fill: none;
    stroke: #bdbdbd;
    stroke-width: 7;
    stroke-linecap: round;
}

.logo{
    display: flex;
    flex-direction: column;
    justify-content: center;
    align-items: center;
    width: 76px;
    height: 76px;
    margin-left: 28px;
    padding-bottom: 2px;
    border-radius: 13px;
    background-color: #ff4a00;
    font-size: 28px;
    font-weight: bold;
    line-height: 33px;
}

.stock-name{
    display: flex;
    align-items: center;
    height: 100px;
    padding-left: 84px;
    font-size: 52.5px;
}

.qi{
    width: 44px;
    height: 44px;
    margin: 10px 0 0 8px;
    border-radius: 50%;
    background: linear-gradient(#5585ec, #7aa0f0);
    font-size: 27px;
    font-weight: bold;
    line-height: 42px;
    text-align: center;
}

.stock-code{
    display: flex;
    align-items: center;
    height: 40px;
    padding-left: 18px;
}

.code{
    width: 145px;
    padding-bottom: 5px;
    font-size: 41px;
    color: #8e8e93;
    line-height: 40px;
}

.tag{
    height: 39px;
    margin-right: 7px;
    padding: 0 3px;
    border-radius: 6px;
    background-color: #2f74c0;
    font-size: 34px;
    line-height: 36px;
}

.down{
    margin-left: 5px;
}

.down path{
    fill: #444;
}

.topbar-right{
    display: flex;
    align-items: center;
    padding: 6px 0 0 62px;
}

.topbar-right .line-icon{
    margin-left: 46px;
    fill: none;
    stroke: #dedede;
    stroke-width: 5;
    stroke-linecap: round;
}

.topbar-right .search{
    margin-left: 49px;
}

/* quote */
.quote{
    display: grid;
    grid-template-columns: repeat(4, 270px);
    grid-template-rows: repeat(3, 90px);
    column-gap: 30px;
    height: 302px;
    padding: 15px 0 0 29px;
    background-color: #1c1c1c;
    border-bottom: 1px solid #2a2a2a;
}

.price{
    grid-row: span 2;
}

.price-now{
    height: 105px;
    font-size: 109px;
    line-height: 103px;
    letter-spacing: -2.5px;
    color: #ee0000;
    -webkit-text-stroke: 5px #ee0000;
}

.price-change{
    display: flex;
    justify-content: space-between;
    margin-left: -1px;
    font-size: 51px;
    line-height: 86px;
    color: #dc0f0f;
    letter-spacing: -1px;
}

.price-change .diff{
    letter-spacing: .6px;
}

.cell{
    display: flex;
    align-items: center;
    height: 90px;
    font-size: 46.5px;
}

.cell label{
    margin-left: -1px;
    padding-bottom: 4px;
    color: #8e8e93;
}

.cell b{
    margin-left: auto;
    padding-bottom: 4px;
    font-size: 48px;
    letter-spacing: -.8px;
    white-space: nowrap;
}

.cell b.big{
    font-size: 53px;
    letter-spacing: 0;
}

.cell b.small{
    padding-bottom: 2px;
    font-size: 36.5px;
    letter-spacing: -.4px;
}

.cell sup{
    align-self: flex-start;
    margin: 7px 0 0 1px;
    font-size: 24px;
    line-height: 30px;
    color: #8e8e93;
}

.dots{
    width: 34px;
    height: 34px;
    margin: 0 0 3px 2px;
    fill: none;
    stroke: #6a6a6a;
    stroke-width: 2.5;
}

.dots path{
    stroke-width: 4.5;
    stroke-linecap: round;
}

.cell-more{
    justify-content: flex-end;
}

.more-btn{
    width: 139px;
    height: 61px;
    margin-right: -2px;
    font-size: 39.5px;
    line-height: 57px;
}

/* notice */
.notice{
    display: flex;
    align-items: center;
    height: 118px;
    padding: 0 0 2px 37px;
    background-color: #1c1c1c;
    border-bottom: 1px solid #333;
}

.notice-text{
    width: 971px;
    margin-left: 36px;
    padding-bottom: 6px;
    font-size: 44px;
    line-height: 100px;
    color: #e6e6e6;
    white-space: nowrap;
}

.date{
    letter-spacing: 1.4px;
}

.red-dot{
    width: 21px;
    height: 21px;
    margin-left: 10px;
    border-radius: 50%;
    background-color: #ee0000;
}

.close{
    margin-left: 32px;
    stroke: #999;
    stroke-width: 4;
}

/* tabs */
.tabs{
    display: flex;
    align-items: center;
    height: 117px;
    background-color: #1c1c1c;
    border-bottom: 1px solid #333;
}

.tab{
    position: relative;
    width: 182px;
    padding: 0 4px 4px 0;
    font-size: 49px;
    line-height: 108px;
    text-align: center;
    color: #8e8e93;
}

.tab.active{
    color: #2f74c0;
}

.tab.active::after{
    content: "";
    position: absolute;
    left: 56px;
    bottom: 6px;
    width: 68px;
    height: 7px;
    border-radius: 4px;
    background-color: #2f74c0;
}

.tab-more{
    display: flex;
    align-items: center;
    justify-content: center;
    width: 206px;
}

.tab-more svg{
    margin-left: 9px;
}

.gear{
    margin-left: 13px;
    fill: none;
    stroke: #8e8e93;
    stroke-width: 4.5;
}

/* charts */
.legend{
    display: flex;
    height: 70px;
    padding-left: 15px;
    font-size: 41px;
    line-height: 64px;
}

.legend span{
    margin-right: 12px;
}

.legend .latest{
    margin-right: 25px;
    color: #dc0f0f;
}

.legend .percent{
    margin-left: -3px;
    letter-spacing: -1.2px;
}

.legend i{
    margin-left: 5px;
    font-size: 43px;
}

.grid{
    fill: none;
    stroke: #292929;
    stroke-width: 1.5;
}

.grid-dot{
    stroke: #3a3a3a;
    stroke-dasharray: 1 1;
}

.zero{
    stroke: #8c8c8c;
    stroke-width: 1.7;
    stroke-dasharray: 10 10;
}

.blue-line{
    stroke: #2c5580;
    stroke-width: 1.7;
    stroke-dasharray: 4 2;
}

.avg, .now{
    fill: none;
    stroke: #efe26a;
    stroke-width: 5;
    stroke-linejoin: round;
}

.now{
    stroke: #ebebeb;
}

.axis{
    font-size: 47.5px;
}

.axis-right{
    text-anchor: end;
    letter-spacing: -1.9px;
}

.axis-rsi{
    font-size: 37px;
}

.mark path{
    stroke-width: 3.7;
    stroke-dasharray: 8 6;
}

.mark rect{
    stroke: #b3bccb;
    stroke-width: 2;
}

.mark text{
    font-family: "Liberation Sans", sans-serif;
    font-size: 37px;
    font-weight: bold;
    text-anchor: middle;
    fill: #b9c3d5;
}

.sell path{ stroke: #24579b; }
.sell rect{ fill: #195cb8; }
.sell circle{ fill: #1b6ad6; }
.buy path{ stroke: #a33a2e; }
.buy rect{ fill: #b53225; stroke: #cbaaa8; }
.buy circle{ fill: #dc3c2c; }
.buy text{ fill: #c9b0b0; }

.rsi-bar{
    display: flex;
    align-items: center;
    height: 74px;
    padding-left: 17px;
    font-size: 46.5px;
    line-height: 66px;
    letter-spacing: .35px;
}

.rsi-bar span{
    display: flex;
    align-items: center;
    width: 351px;
    padding-bottom: 4px;
    white-space: nowrap;
}

.rsi-select{
    display: flex;
    align-items: center;
    width: 153px;
    height: 55px;
    margin-right: 2px;
    padding: 0 0 3px 32px;
    font-size: 41px;
    line-height: 50px;
    color: #fff;
}

.rsi-select svg{
    margin: 3px 0 0 31px;
}

.up{
    width: 26px;
    height: 42px;
    margin: 4px 0 0 11px;
    fill: none;
    stroke: currentColor;
    stroke-width: 4;
}

.rsi2{ color: #fbec26; }
.rsi3{ color: #ea17df; }

.line1, .line2, .line3{
    fill: none;
    stroke: #fff;
    stroke-width: 3.5;
}

.line2{
    stroke: #f7e92f;
    stroke-width: 4;
}

.line3{
    stroke: #ea1fd0;
    stroke-width: 5.5;
}

.dates{
    display: grid;
    grid-template-columns: repeat(5, 240px);
    height: 69px;
    margin: 0 14px;
    border-bottom: 2px solid #292929;
    font-size: 47px;
    line-height: 64px;
    text-align: center;
    color: #6e6e6e;
}

.dates span{
    padding-left: 30px;
}

.bottom{
    height: 46px;
    padding: 20px 20px 0;
    overflow: hidden;
}

.bottom-panel{
    height: 120px;
    border-radius: 48px;
    background-color: #111922;
}
```
